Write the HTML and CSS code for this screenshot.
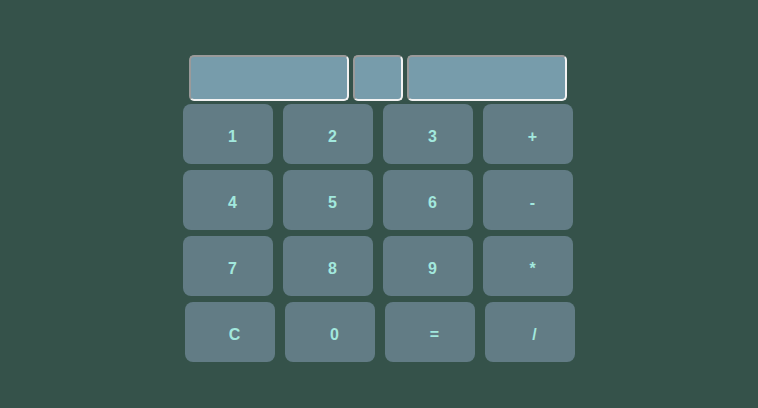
FILE: index.html
```html
<!DOCTYPE html>
<html>
<head>
<meta charset="utf-8">
<link rel="stylesheet" href="styles.css">
</head>
<body>
<div class="calc">
  <div class="display">
    <input class="field wide" type="text">
    <input class="field narrow" type="text">
    <input class="field wide" type="text">
  </div>
  <div class="keys">
    <div class="row">
      <button class="key">1</button><button class="key">2</button><button class="key">3</button><button class="key">+</button>
    </div>
    <div class="row">
      <button class="key">4</button><button class="key">5</button><button class="key">6</button><button class="key">-</button>
    </div>
    <div class="row">
      <button class="key">7</button><button class="key">8</button><button class="key">9</button><button class="key">*</button>
    </div>
    <div class="row last">
      <button class="key">C</button><button class="key">0</button><button class="key">=</button><button class="key">/</button>
    </div>
  </div>
</div>
</body>
</html>
```
FILE: styles.css
```css
html, body {
  margin: 0;
  padding: 0;
  background: #35524A;
  width: 100%;
  height: 100%;
}
.calc {
  display: flex;
  flex-direction: column;
  align-items: center;
  padding-top: 55px;
  font-family: "Liberation Sans", Arial, sans-serif;
}
.display {
  display: flex;
  gap: 4px;
  margin-bottom: 3px;
  margin-right: 2px;
}
.field {
  box-sizing: border-box;
  height: 46px;
  margin: 0;
  padding: 0;
  background: #779CAB;
  border-width: 2px;
  border-style: solid;
  border-color: #9a9a9a #f2f2f2 #f2f2f2 #9a9a9a;
  border-radius: 5px;
  outline: none;
}
.wide { width: 160px; }
.narrow { width: 50px; }
.keys {
  display: flex;
  flex-direction: column;
  gap: 6px;
}
.row {
  display: flex;
  gap: 10px;
}
.row.last {
  padding-left: 2px;
}
.key {
  box-sizing: border-box;
  width: 90px;
  height: 60px;
  margin: 0;
  padding: 5px 0 0 9px;
  border: none;
  border-radius: 8px;
  background: #627C85;
  color: #A2E8DD;
  font-family: "Liberation Sans", Arial, sans-serif;
  font-size: 16px;
  font-weight: bold;
}
```
